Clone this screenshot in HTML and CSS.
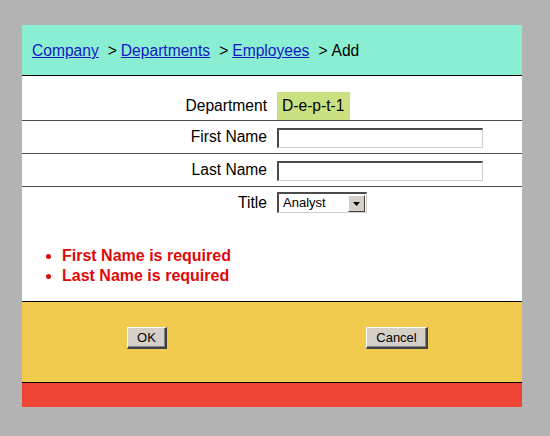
FILE: index.html
```html
<!DOCTYPE html>
<html>
<head>
<meta charset="utf-8">
<link rel="stylesheet" href="styles.css">
</head>
<body>
<div class="page">
  <div class="header"><a href="#">Company</a><span class="sep">&gt;</span><a href="#">Departments</a><span class="sep">&gt;</span><a href="#">Employees</a><span class="sep">&gt;</span><span>Add</span></div>
  <div class="content">
    <div class="row row-dept">
      <div class="label">Department</div>
      <div class="value"><span class="dept">D-e-p-t-1</span></div>
    </div>
    <div class="row">
      <div class="label">First Name</div>
      <div class="value"><input class="text" type="text"></div>
    </div>
    <div class="row">
      <div class="label">Last Name</div>
      <div class="value"><input class="text" type="text"></div>
    </div>
    <div class="row row-last">
      <div class="label">Title</div>
      <div class="value">
        <span class="select">
          <span class="select-text">Analyst</span>
          <span class="select-btn"><svg width="7" height="4" viewBox="0 0 7 4"><path d="M0 0h7L3.5 4z" fill="#000"/></svg></span>
        </span>
      </div>
    </div>
    <ul class="errors">
      <li>First Name is required</li>
      <li>Last Name is required</li>
    </ul>
  </div>
  <div class="footer">
    <div class="cell"><button class="btn">OK</button></div>
    <div class="cell"><button class="btn">Cancel</button></div>
  </div>
  <div class="bottom"></div>
</div>
</body>
</html>
```

FILE: styles.css
```css
html, body {
  margin: 0;
  padding: 0;
  background: #b3b3b3;
}
body {
  padding: 25px 0 0 22px;
  font-family: "Liberation Sans", Arial, sans-serif;
  font-size: 15.6px;
  color: #000;
}
.page {
  width: 500px;
}
.header {
  background: #8aefd2;
  height: 33px;
  padding: 17px 0 0 10px;
  line-height: 18px;
  border-bottom: 1px solid #000;
  white-space: nowrap;
}
.header a {
  color: #1616c8;
  text-decoration: underline;
}
.sep {
  margin: 0 4px 0 9px;
}
.content {
  background: #fff;
  padding-top: 16px;
}
.row {
  display: flex;
  border-bottom: 1px solid #4a4a4a;
  height: 32px;
  align-items: center;
}
.row-dept {
  height: 28px;
  align-items: stretch;
}
.row-last {
  border-bottom: none;
  height: 32px;
  align-items: flex-start;
  padding-top: 5px;
  box-sizing: border-box;
}
.label {
  width: 250px;
  box-sizing: border-box;
  padding-right: 5px;
  text-align: right;
  display: flex;
  align-items: center;
  justify-content: flex-end;
}
.row-last .label {
  height: 21px;
}
.value {
  padding-left: 5px;
  display: flex;
  align-items: center;
}
.dept {
  background: #cbe080;
  padding: 0 6px 0 5px;
  display: flex;
  align-items: center;
  height: 28px;
}
.text {
  width: 206px;
  height: 20px;
  box-sizing: border-box;
  margin: 1px 0 0 0;
  padding: 0;
  border-style: solid;
  border-width: 2px 1px 1px 2px;
  border-color: #4a4a4a #d4d0c8 #d4d0c8 #4a4a4a;
  background: #fff;
  outline: none;
}
.select {
  position: relative;
  display: block;
  width: 90px;
  height: 21px;
  box-sizing: border-box;
  border-style: solid;
  border-width: 2px 1px 1px 2px;
  border-color: #4a4a4a #d4d0c8 #d4d0c8 #4a4a4a;
  background: #fff;
}
.select-text {
  display: block;
  font-size: 13px;
  line-height: 18px;
  padding-left: 4px;
}
.select-btn {
  position: absolute;
  right: 1px;
  top: 1px;
  width: 15px;
  height: 15px;
  background: #d4d0c8;
  border-style: solid;
  border-width: 1px;
  border-color: #fff #404040 #404040 #fff;
  display: flex;
  align-items: center;
  justify-content: center;
}
.errors {
  margin: 27px 0 0 0;
  padding: 0 0 15px 40px;
  color: #dd0a0a;
  font-weight: bold;
  font-size: 16px;
  line-height: 20px;
}
.footer {
  background: #f1cb4d;
  border-top: 1px solid #000;
  border-bottom: 1px solid #000;
  display: flex;
  align-items: flex-start;
  padding-top: 25px;
  height: 55px;
}
.cell {
  width: 50%;
  display: flex;
  justify-content: center;
}
.btn {
  font-family: "Liberation Sans", Arial, sans-serif;
  font-size: 13px;
  height: 22px;
  padding: 0 9px;
  background: #d4d0c8;
  color: #000;
  border-style: solid;
  border-width: 1px 2px 2px 1px;
  border-color: #fff #404040 #404040 #fff;
  box-shadow: inset -1px -1px 0 #808080;
}
.bottom {
  background: #ef4536;
  height: 24px;
}
```
